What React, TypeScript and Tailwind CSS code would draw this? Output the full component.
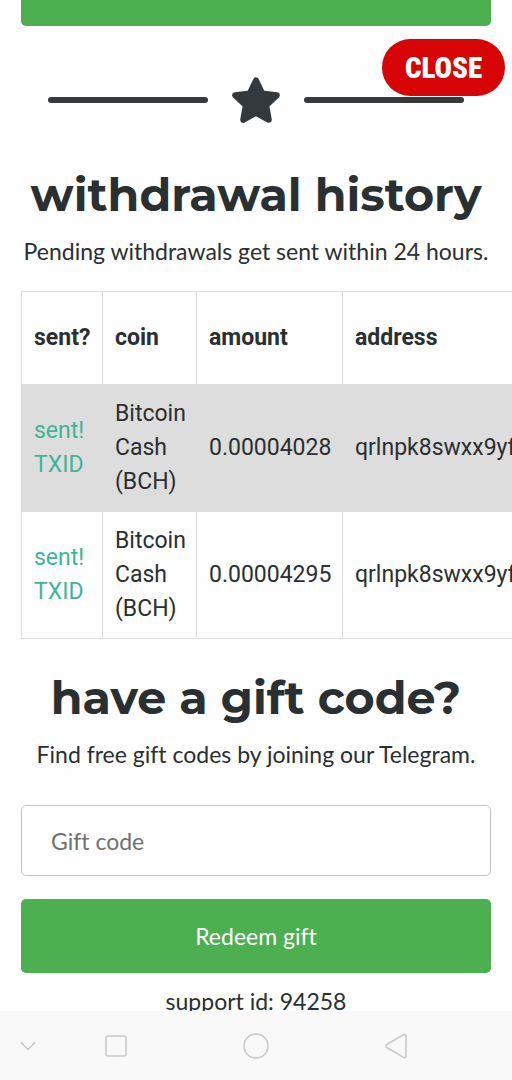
import type { ReactNode } from "react";

type Withdrawal = {
  id: number;
  coin: string;
  amount: string;
  address: string;
};

const withdrawals: Withdrawal[] = [
  { id: 1, coin: "Bitcoin Cash (BCH)", amount: "0.00004028", address: "qrlnpk8swxx9yf" },
  { id: 2, coin: "Bitcoin Cash (BCH)", amount: "0.00004295", address: "qrlnpk8swxx9yf" },
];

function StarDivider() {
  return (
    <div className="mt-[50px] flex items-center justify-center gap-6 px-[27px]">
      <div className="h-[6px] flex-1 rounded-full bg-[#33393c]" />
      <svg viewBox="0 0 48 48" className="size-12 shrink-0" aria-hidden="true">
        <path
          d="M24 4.5 30.2 17.4 44.8 19.2 34.2 29.2 36.8 43.8 24 36.8 11.2 43.8 13.8 29.2 3.2 19.2 17.8 17.4Z"
          fill="#33393c"
          stroke="#33393c"
          strokeWidth="6"
          strokeLinejoin="round"
        />
      </svg>
      <div className="h-[6px] flex-1 rounded-full bg-[#33393c]" />
    </div>
  );
}

function Title({ children }: { children: ReactNode }) {
  return (
    <h2 className="text-center font-[Montserrat,Inter,sans-serif] text-[46px] leading-14 font-bold whitespace-nowrap">
      {children}
    </h2>
  );
}

function HistoryTable() {
  return (
    <div className="mt-[23px] -mr-[21px] overflow-x-auto [scrollbar-width:none]">
      <table className="w-[760px] table-fixed border-collapse border border-[#dddddd] font-[Roboto,sans-serif] text-[23px] leading-[34px]">
        <thead>
          <tr className="text-left">
            <th className="w-[81px] border border-[#dddddd] px-3 py-[29px]">sent?</th>
            <th className="w-[94px] border border-[#dddddd] px-3">coin</th>
            <th className="w-[146px] border border-[#dddddd] px-3">amount</th>
            <th className="border border-[#dddddd] px-3">address</th>
          </tr>
        </thead>
        <tbody>
          {withdrawals.map((w) => (
            <tr key={w.id} className="odd:bg-[#dddddd]">
              <td className="border border-[#dddddd] px-3">
                <a href="#txid" className="text-[#3fb598]">
                  sent! TXID
                </a>
              </td>
              <td className="border border-[#dddddd] px-3 py-3">{w.coin}</td>
              <td className="border border-[#dddddd] px-3">{w.amount}</td>
              <td className="border border-[#dddddd] px-3">{w.address}</td>
            </tr>
          ))}
        </tbody>
      </table>
    </div>
  );
}

function NavBar() {
  return (
    <nav className="flex h-[69px] shrink-0 items-center bg-[#f9f9f9] text-[#c8c8c8]">
      <button aria-label="Hide" className="flex w-[11%] justify-center">
        <svg width="18" height="12" viewBox="0 0 18 12" fill="none" stroke="currentColor" strokeWidth="1.5">
          <path d="M1.5 2 9 9.5 16.5 2" />
        </svg>
      </button>
      <button aria-label="Recent apps" className="flex w-[23.5%] justify-center">
        <svg width="22" height="22" viewBox="0 0 22 22" fill="none" stroke="currentColor" strokeWidth="1.5">
          <rect x="1" y="1" width="20" height="20" rx="2" />
        </svg>
      </button>
      <button aria-label="Home" className="flex w-[31%] justify-center">
        <svg width="26" height="26" viewBox="0 0 26 26" fill="none" stroke="currentColor" strokeWidth="1.5">
          <circle cx="13" cy="13" r="12" />
        </svg>
      </button>
      <button aria-label="Back" className="flex w-[23.5%] justify-center">
        <svg width="24" height="26" viewBox="0 0 24 26" fill="none" stroke="currentColor" strokeWidth="1.5" strokeLinejoin="round">
          <path d="M20.2 1.4 2.7 11.5Q.6 13 2.7 14.5L20.2 24.6Q22 25 22 23V3Q22 1 20.2 1.4Z" />
        </svg>
      </button>
    </nav>
  );
}

export default function App() {
  return (
    <div className="relative flex h-screen flex-col bg-[#fefefe] font-[Lato,sans-serif] text-[23px] leading-[34px] text-[#2a2f31] [font-variant-ligatures:none]">
      <main className="min-h-0 flex-1 overflow-hidden px-[21px]">
        <button aria-label="Withdraw" className="block h-[26px] w-full rounded-b-[5px] bg-[#4caf50]" />
        <StarDivider />

        <section className="mt-[43px]">
          <Title>withdrawal history</Title>
          <p className="mt-[11px] text-center whitespace-nowrap">Pending withdrawals get sent within 24 hours.</p>
          <HistoryTable />
        </section>

        <section className="mt-[31px]">
          <Title>have a gift code?</Title>
          <p className="mt-[11px] text-center whitespace-nowrap">Find free gift codes by joining our Telegram.</p>
          <form onSubmit={(e) => e.preventDefault()}>
            <input
              type="text"
              aria-label="Gift code"
              placeholder="Gift code"
              className="mt-[34px] block h-[71px] w-full rounded-[5px] border border-[#c4c4c4] bg-transparent px-[29px] placeholder:text-[#707070]"
            />
            <button type="submit" className="mt-[23px] block h-[74px] w-full rounded-[5px] bg-[#4caf50] text-white">
              Redeem gift
            </button>
          </form>
        </section>

        <p className="mt-[11px] text-center">support id: 94258</p>
      </main>
      <NavBar />

      <button className="absolute top-[39px] right-[7px] h-[57px] w-[123px] rounded-full bg-[#d60404] font-['Roboto_Condensed','Liberation_Sans_Narrow',sans-serif] text-[29px] font-black text-white">
        CLOSE
      </button>
    </div>
  );
}
